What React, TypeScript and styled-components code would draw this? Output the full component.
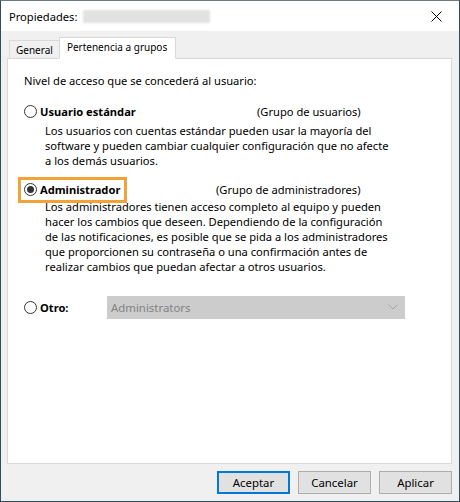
import { createGlobalStyle } from 'styled-components';
import styled from 'styled-components';

const GlobalStyle = createGlobalStyle`
  html, body {
    margin: 0;
    padding: 0;
    background: #ffffff;
  }
  body {
    font-family: "Noto Sans", "Open Sans", Arial, sans-serif;
    font-size: 11.15px;
    color: #000;
  }
`;

const Window = styled.div`
  width: 460px;
  height: 502px;
  box-sizing: border-box;
  display: flex;
  flex-direction: column;
  background: #f0f0f0;
  border: 1px solid #2d4d63;
  border-top-color: #6b7b86;
`;

const TitleBar = styled.div`
  height: 30px;
  flex: none;
  display: flex;
  align-items: center;
  background: #ffffff;
  padding: 0 0 0 8px;
`;

const TitleText = styled.span`
  font-size: 11.15px;
`;

const Blurred = styled.div`
  width: 127px;
  height: 13px;
  margin-left: 6px;
  background: #e2e2e2;
  filter: blur(1px);
`;

const CloseButton = styled.div`
  margin-left: auto;
  width: 46px;
  height: 30px;
  display: flex;
  align-items: center;
  justify-content: center;
`;

const Body = styled.div`
  flex: 1;
  display: flex;
  flex-direction: column;
  padding: 6px 7px 0 6px;
`;

const TabStrip = styled.div`
  display: flex;
  align-items: flex-end;
  height: 21px;
  padding-left: 2px;
  position: relative;
  z-index: 1;
  font-size: 10px;
`;

const Tab = styled.div<{ $active?: boolean }>`
  box-sizing: border-box;
  display: flex;
  align-items: center;
  border: 1px solid #d9d9d9;
  border-bottom: ${(p) => (p.$active ? '1px solid #ffffff' : 'none')};
  background: ${(p) => (p.$active ? '#ffffff' : '#f0f0f0')};
  height: ${(p) => (p.$active ? '22px' : '18px')};
  margin-bottom: ${(p) => (p.$active ? '-1px' : '0')};
  padding: ${(p) => (p.$active ? '0 8px 2px 7px' : '0 6px 0 6px')};
  margin-left: ${(p) => (p.$active ? '-1px' : '0')};
`;

const Panel = styled.div`
  box-sizing: border-box;
  height: 406px;
  background: #ffffff;
  border: 1px solid #d9d9d9;
  padding: 14px 0 0 16px;
`;

const Intro = styled.div`
  line-height: 16px;
  margin-bottom: 14px;
`;

const Row = styled.div<{ $noteAt: number; $height: number }>`
  display: grid;
  grid-template-columns: ${(p) => p.$noteAt}px auto;
  align-items: center;
  height: ${(p) => p.$height}px;
`;

const Choice = styled.label`
  display: flex;
  align-items: center;
  font-weight: 700;
  white-space: nowrap;
`;

const Highlight = styled.div`
  justify-self: start;
  display: flex;
  align-items: center;
  margin-left: -6px;
  height: 26px;
  box-sizing: border-box;
  width: 109px;
  padding-left: 3px;
  border: 3px solid #f2a236;
`;

const Radio = styled.span<{ $checked?: boolean }>`
  box-sizing: border-box;
  width: 13px;
  height: 13px;
  border-radius: 50%;
  border: 1px solid #333333;
  background: #ffffff;
  margin-right: 3px;
  display: flex;
  align-items: center;
  justify-content: center;
  &::after {
    content: '';
    display: ${(p) => (p.$checked ? 'block' : 'none')};
    width: 7px;
    height: 7px;
    border-radius: 50%;
    background: #333333;
  }
`;

const Note = styled.span`
  white-space: nowrap;
`;

const Description = styled.p<{ $gap: number; $after: number }>`
  margin: ${(p) => p.$gap}px 0 ${(p) => p.$after}px 21px;
  line-height: 15.2px;
  white-space: nowrap;
`;

const Select = styled.div`
  box-sizing: border-box;
  width: 298px;
  height: 23px;
  display: flex;
  align-items: center;
  padding: 0 3px;
  background: #cccccc;
  border: 1px solid #cccccc;
  color: #838383;
  font-size: 11.4px;
`;

const Chevron = styled.svg`
  margin-left: auto;
  margin-right: 3px;
`;

const ButtonRow = styled.div`
  display: flex;
  justify-content: flex-end;
  gap: 8px;
  padding: 7px 0 0 0;
`;

const Button = styled.button<{ $primary?: boolean }>`
  box-sizing: border-box;
  width: 73px;
  height: 23px;
  font-family: inherit;
  font-size: 11.4px;
  color: #000;
  background: #e1e1e1;
  border: 1px solid ${(p) => (p.$primary ? '#0078d7' : '#adadad')};
  box-shadow: ${(p) => (p.$primary ? 'inset 0 0 0 1px #0078d7' : 'none')};
  padding: 0;
`;

export default function App() {
  return (
    <>
      <GlobalStyle />
      <Window>
        <TitleBar>
          <TitleText>Propiedades:</TitleText>
          <Blurred />
          <CloseButton>
            <svg width="11" height="11" viewBox="0 0 11 11">
              <path d="M0.5 0.5 L10.5 10.5 M10.5 0.5 L0.5 10.5" stroke="#000" strokeWidth="1" fill="none" />
            </svg>
          </CloseButton>
        </TitleBar>
        <Body>
          <TabStrip>
            <Tab>General</Tab>
            <Tab $active>Pertenencia a grupos</Tab>
          </TabStrip>
          <Panel>
            <Intro>Nivel de acceso que se concederá al usuario:</Intro>

            <Row $noteAt={233} $height={16}>
              <Choice>
                <Radio />
                Usuario estándar
              </Choice>
              <Note>(Grupo de usuarios)</Note>
            </Row>
            <Description $gap={4} $after={8}>
              Los usuarios con cuentas estándar pueden usar la mayoría del
              <br />
              software y pueden cambiar cualquier configuración que no afecte
              <br />
              a los demás usuarios.
            </Description>

            <Row $noteAt={192} $height={26}>
              <Highlight>
                <Choice>
                  <Radio $checked />
                  Administrador
                </Choice>
              </Highlight>
              <Note>(Grupo de administradores)</Note>
            </Row>
            <Description $gap={-4} $after={21}>
              Los administradores tienen acceso completo al equipo y pueden
              <br />
              hacer los cambios que deseen. Dependiendo de la configuración
              <br />
              de las notificaciones, es posible que se pida a los administradores
              <br />
              que proporcionen su contraseña o una confirmación antes de
              <br />
              realizar cambios que puedan afectar a otros usuarios.
            </Description>

            <Row $noteAt={83} $height={23}>
              <Choice>
                <Radio />
                Otro:
              </Choice>
              <Select>
                Administrators
                <Chevron width="10" height="6" viewBox="0 0 10 6">
                  <path d="M0.5 0.5 L5 5 L9.5 0.5" stroke="#a6a6a6" strokeWidth="1" fill="none" />
                </Chevron>
              </Select>
            </Row>
          </Panel>
          <ButtonRow>
            <Button $primary>Aceptar</Button>
            <Button>Cancelar</Button>
            <Button>Aplicar</Button>
          </ButtonRow>
        </Body>
      </Window>
    </>
  );
}
